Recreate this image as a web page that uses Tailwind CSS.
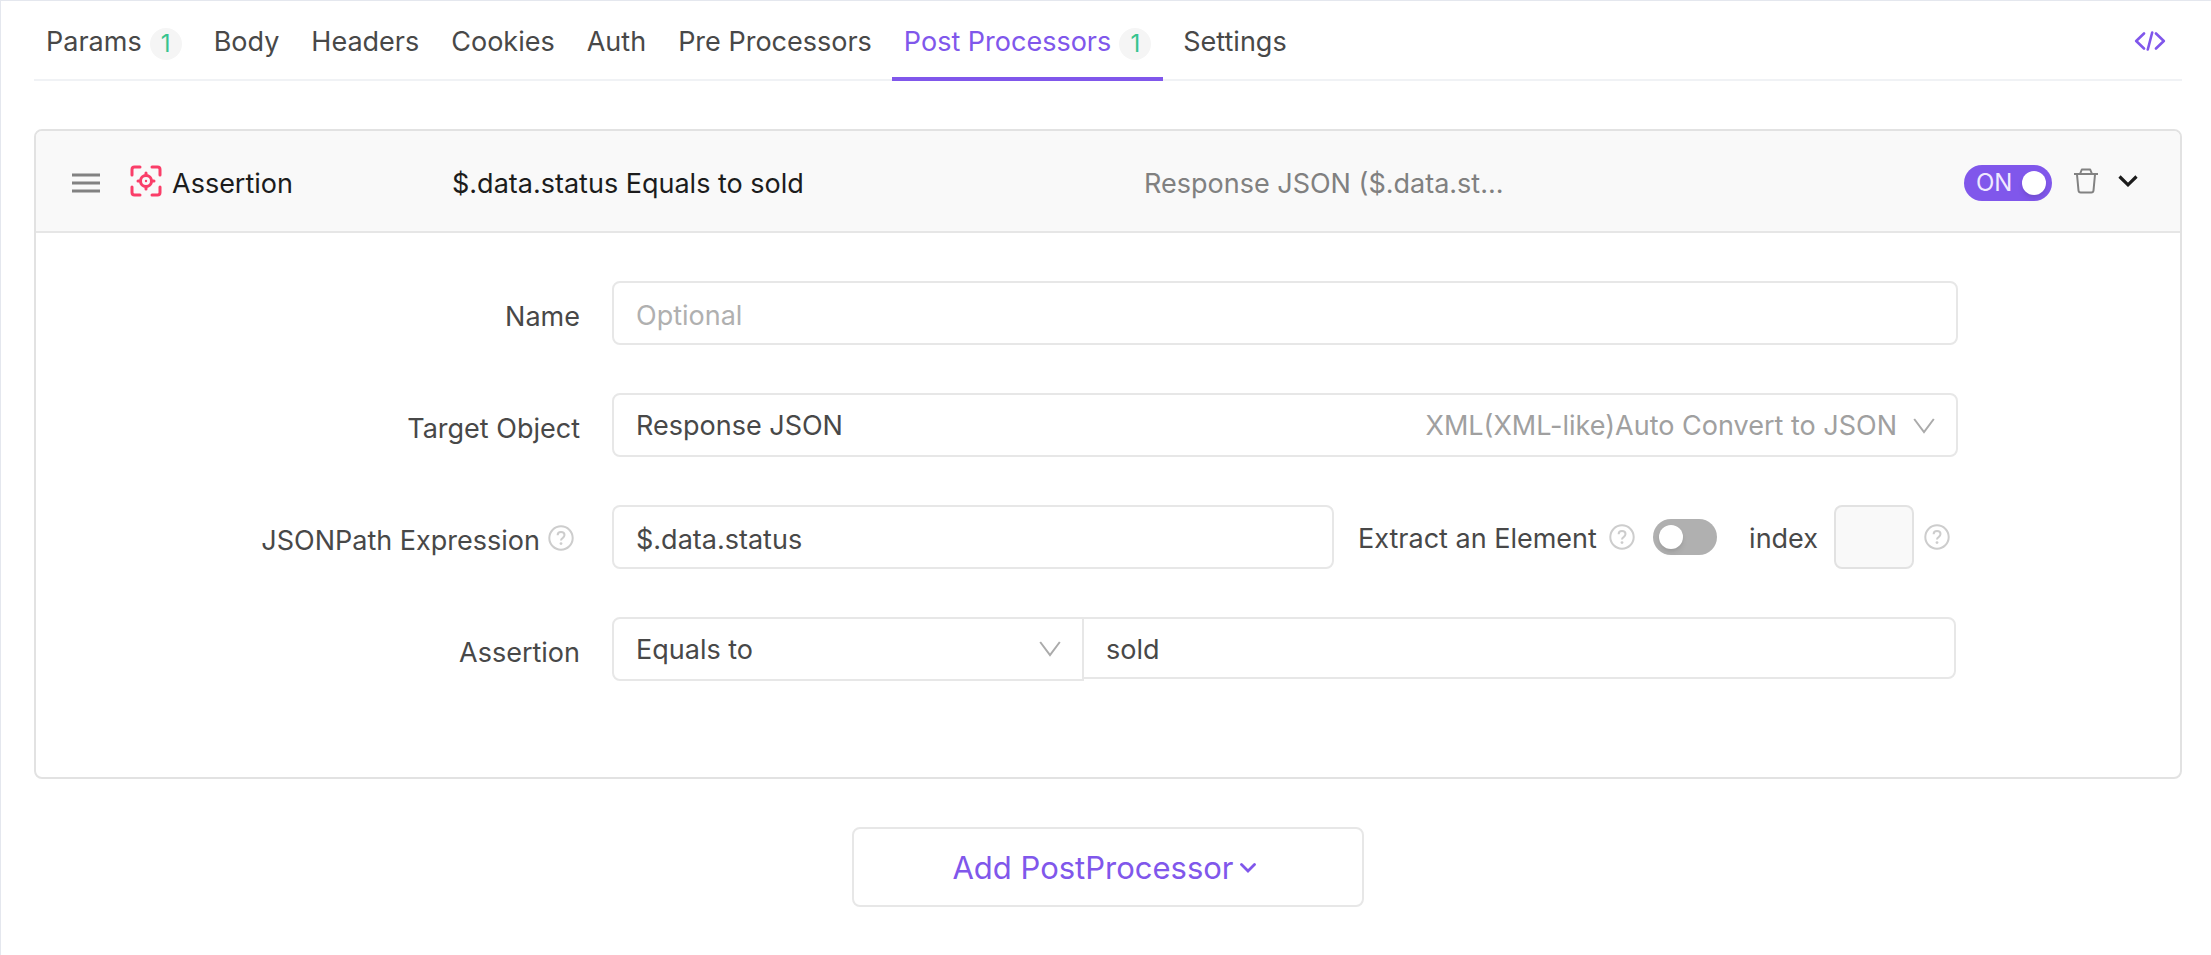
<!DOCTYPE html>
<html lang="en">
<head>
<meta charset="utf-8">
<title>Post Processors</title>
<script src="https://cdn.jsdelivr.net/npm/@tailwindcss/browser@4"></script>
</head>
<body class="min-h-screen border-t border-l border-[#e4e7ee] bg-white pr-[29px] pl-[33px] font-[Inter,'Liberation_Sans',sans-serif] text-[27px] leading-8 text-[#484848]">
<svg class="hidden">
  <symbol id="help" viewBox="0 0 26 26"><circle cx="13" cy="13" r="11.7" fill="none" stroke="#cdcdcd" stroke-width="2"/><path d="M9.6 10.3C9.6 8.3 11 7 13 7s3.5 1.200 3.500 3.100c0 1.500-.8 2.200-1.900 3-1.100.7-1.600 1.300-1.600 2.500" fill="none" stroke="#cdcdcd" stroke-width="2"/><circle cx="13" cy="18.600" r="1.400" fill="#cdcdcd"/></symbol>
  <symbol id="caret" viewBox="0 0 22 16"><path d="M1.200 1 11 14 20.800 1" fill="none" stroke="#ababab" stroke-width="2"/></symbol>
</svg>

<nav class="flex h-20 items-stretch justify-between border-b-2 border-[#f0f2f5]" aria-label="Request sections">
  <div class="-mb-[2px] flex gap-2">
    <a href="#params" class="flex items-center gap-2 px-3 pt-[2px]">Params <span class="mt-1 flex size-8 items-center justify-center rounded-full bg-[#f5f5f5] text-2xl text-[#36c48e]">1</span></a>
    <a href="#body" class="flex items-center px-3 pt-[2px]">Body</a>
    <a href="#headers" class="flex items-center px-3 pt-[2px]">Headers</a>
    <a href="#cookies" class="flex items-center px-3 pt-[2px]">Cookies</a>
    <a href="#auth" class="flex items-center px-3 pt-[2px]">Auth</a>
    <a href="#pre" class="flex items-center px-3 pt-[2px]">Pre Processors</a>
    <a href="#post" aria-current="page" class="flex items-center gap-2 border-b-4 border-[#8057eb] px-3 pt-[6px] text-[#8057eb]">Post Processors <span class="mt-1 flex size-8 items-center justify-center rounded-full bg-[#f5f5f5] text-2xl text-[#36c48e]">1</span></a>
    <a href="#settings" class="flex items-center px-3 pt-[2px]">Settings</a>
  </div>
  <button class="px-4 pt-[2px]" aria-label="Show code">
    <svg class="h-5 w-8" viewBox="0 0 32 20" fill="none" stroke="#8057eb" stroke-width="2.600" stroke-linecap="round" stroke-linejoin="round"><path d="M10 2.500 2.200 10l7.800 7.500M22 2.500l7.800 7.500-7.800 7.500M18.200 1.500 13.800 18.500"/></svg>
  </button>
</nav>

<main class="mt-12">
  <section class="rounded-lg border-2 border-[#e2e2e2] pb-24">
    <header class="flex h-[102px] items-center rounded-t-md border-b-2 border-[#e6e6e6] bg-[#f9f9f9] pr-[42px] pl-9 text-[#1c1c1c]">
      <button aria-label="Drag to reorder" class="mt-1 mr-[30px]">
        <svg class="h-5 w-7" viewBox="0 0 28 20" fill="none" stroke="#828282" stroke-width="3"><path d="M0 2h28M0 10h28M0 18h28"/></svg>
      </button>
      <svg class="mr-[10px] h-8 w-8" viewBox="0 0 32 32" fill="none" stroke="#fa3e69" stroke-width="3" stroke-linecap="round" stroke-linejoin="round"><path d="M2 10V4.500Q2 2 4.500 2H10M22 2h5.500Q30 2 30 4.500V10M30 22v5.500Q30 30 27.500 30H22M10 30H4.500Q2 30 2 27.500V22"/><circle cx="16" cy="16" r="5.500"/><path d="M16 8v2M16 22v2M8 16h2M22 16h2"/><circle cx="16" cy="16" r="1.200" fill="#fa3e69" stroke="none"/></svg>
      <span class="w-[280px] pt-[6px]">Assertion</span>
      <span class="w-[692px] pt-[6px]">$.data.status Equals to sold</span>
      <span class="pt-[6px] whitespace-nowrap text-[#808080]">Response JSON ($.data.st...</span>
      <button role="switch" aria-checked="true" class="mt-1 ml-auto flex h-9 w-[88px] items-center justify-between rounded-full bg-[#8057eb] pr-[6px] pl-3 text-2xl text-[#f0eaff]">ON<span class="size-6 rounded-full bg-white shadow-md"></span></button>
      <button aria-label="Delete" class="ml-[22px]">
        <svg class="h-[26px] w-6" viewBox="0 0 24 26" fill="none" stroke="#828282" stroke-width="2" stroke-linejoin="round"><path d="M0 6h24M6 6l1.800-4.500h8.400L18 6M3 6.500l1.500 16Q4.700 24.500 6.700 24.500h10.600q2 0 2.200-2L21 6.500"/></svg>
      </button>
      <button aria-label="Collapse" class="ml-5">
        <svg class="h-3 w-5" viewBox="0 0 20 12" fill="none" stroke="#1c1c1c" stroke-width="3.200"><path d="M1.500 1.500 10 9.800l8.500-8.300"/></svg>
      </button>
    </header>

    <form class="flex flex-col gap-12 pt-12 pr-[222px]">
      <div class="flex">
        <label for="name" class="w-[576px] pt-5 pr-8 text-right">Name</label>
        <input id="name" placeholder="Optional" class="h-16 min-w-0 flex-1 rounded-lg border-2 border-[#e7e7e7] px-[22px] pt-1 placeholder:text-[#b0b0b0]">
      </div>
      <div class="flex">
        <label for="target" class="w-[576px] pt-5 pr-8 text-right">Target Object</label>
        <div class="grid h-16 flex-1 items-center">
          <select id="target" class="col-start-1 row-start-1 h-16 w-full appearance-none rounded-lg border-2 border-[#e7e7e7] bg-transparent px-[22px] pt-[2px]"><option>Response JSON</option></select>
          <span class="pointer-events-none col-start-1 row-start-1 flex items-center gap-4 justify-self-end pt-[2px] pr-[23px] text-[#a0a0a0]">XML(XML-like)Auto Convert to JSON <svg class="h-4 w-[22px]"><use href="#caret"/></svg></span>
        </div>
      </div>
      <div class="flex">
        <label for="path" class="flex h-16 w-[576px] justify-end gap-2 pt-5 pr-[38px]">JSONPath Expression <svg class="size-[26px]"><use href="#help"/></svg></label>
        <input id="path" value="$.data.status" class="h-16 min-w-0 flex-1 rounded-lg border-2 border-[#e7e7e7] px-[22px] pt-1">
        <div class="flex h-16 w-[624px] items-center pr-2 pl-6">
          <label for="extract" class="pt-1">Extract an Element</label>
          <svg class="ml-3 size-[26px]"><use href="#help"/></svg>
          <button id="extract" type="button" role="switch" aria-checked="false" class="ml-auto flex h-9 w-16 items-center rounded-full bg-[#b0b0b0] px-[6px]"><span class="size-6 rounded-full bg-white shadow-md"></span></button>
          <label for="index" class="ml-8 pt-1">index</label>
          <input id="index" disabled class="ml-4 h-16 w-20 rounded-lg border-2 border-[#e2e2e2] bg-[#f9f9f9] px-3">
          <svg class="ml-[10px] size-[26px]"><use href="#help"/></svg>
        </div>
      </div>
      <div class="flex">
        <label for="op" class="w-[576px] pt-5 pr-8 text-right">Assertion</label>
        <div class="grid h-16 w-[472px] items-center">
          <select id="op" class="col-start-1 row-start-1 h-16 w-full appearance-none rounded-l-lg border-2 border-[#e7e7e7] bg-transparent px-[22px] pt-[2px]"><option>Equals to</option></select>
          <svg class="pointer-events-none col-start-1 row-start-1 mr-[23px] h-4 w-[22px] justify-self-end"><use href="#caret"/></svg>
        </div>
        <input aria-label="Expected value" value="sold" class="mr-[2px] -ml-[2px] h-[62px] min-w-0 flex-1 rounded-r-lg border-2 border-[#e7e7e7] px-[22px] pt-[2px]">
      </div>
    </form>
  </section>

  <button class="mx-auto mt-12 flex h-20 w-[512px] items-center justify-center gap-[6px] rounded-lg border-2 border-[#e7e7e7] pt-[2px] pr-2 text-[31px] text-[#8057eb]">Add PostProcessor
    <svg class="h-3 w-4" viewBox="0 0 16 12" fill="none" stroke="#8057eb" stroke-width="2.800" stroke-linecap="round"><path d="M1.500 2.500 8 9l6.500-6.500"/></svg>
  </button>
</main>
</body>
</html>
